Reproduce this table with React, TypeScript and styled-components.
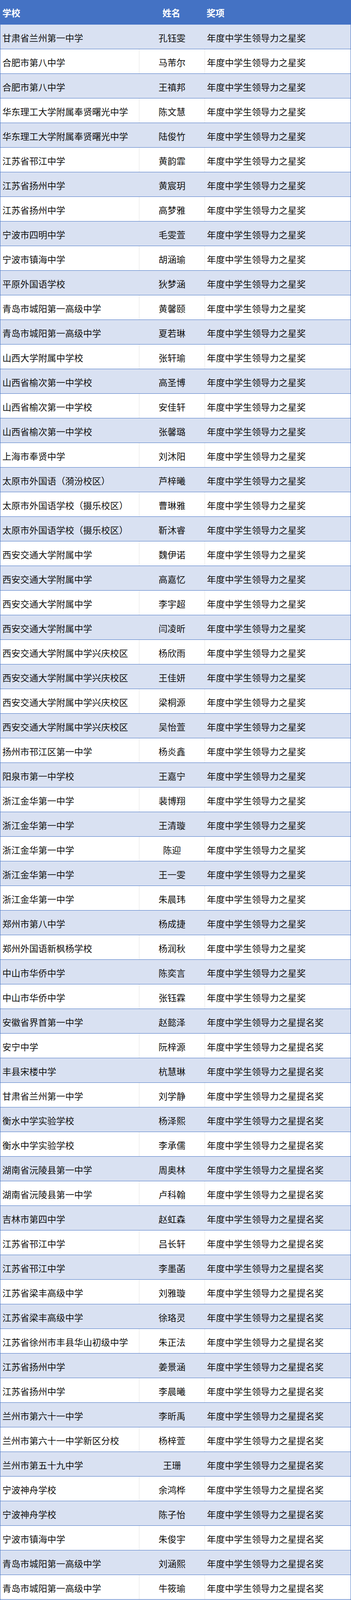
import React from "react";
import styled, { createGlobalStyle } from "styled-components";

const GlobalStyle = createGlobalStyle`
  html, body { margin: 0; padding: 0; background: #ffffff; }
  body { font-family: "Noto Sans CJK SC", "Noto Sans", sans-serif; }
`;

const A = "年度中学生领导力之星奖";
const B = "年度中学生领导力之星提名奖";

const data: [string, string, string][] = [
  ["甘肃省兰州第一中学", "孔钰雯", A],
  ["合肥市第八中学", "马芾尔", A],
  ["合肥市第八中学", "王禛邦", A],
  ["华东理工大学附属奉贤曙光中学", "陈文慧", A],
  ["华东理工大学附属奉贤曙光中学", "陆俊竹", A],
  ["江苏省邗江中学", "黄韵霏", A],
  ["江苏省扬州中学", "黄宸玥", A],
  ["江苏省扬州中学", "高梦雅", A],
  ["宁波市四明中学", "毛雯萱", A],
  ["宁波市镇海中学", "胡涵瑜", A],
  ["平原外国语学校", "狄梦涵", A],
  ["青岛市城阳第一高级中学", "黄馨颐", A],
  ["青岛市城阳第一高级中学", "夏若琳", A],
  ["山西大学附属中学校", "张轩瑜", A],
  ["山西省榆次第一中学校", "高圣博", A],
  ["山西省榆次第一中学校", "安佳轩", A],
  ["山西省榆次第一中学校", "张馨璐", A],
  ["上海市奉贤中学", "刘沐阳", A],
  ["太原市外国语（漪汾校区）", "芦梓曦", A],
  ["太原市外国语学校（摄乐校区）", "曹琳雅", A],
  ["太原市外国语学校（摄乐校区）", "靳沐睿", A],
  ["西安交通大学附属中学", "魏伊诺", A],
  ["西安交通大学附属中学", "高嘉忆", A],
  ["西安交通大学附属中学", "李宇超", A],
  ["西安交通大学附属中学", "闫凌昕", A],
  ["西安交通大学附属中学兴庆校区", "杨欣雨", A],
  ["西安交通大学附属中学兴庆校区", "王佳妍", A],
  ["西安交通大学附属中学兴庆校区", "梁桐源", A],
  ["西安交通大学附属中学兴庆校区", "吴怡萱", A],
  ["扬州市邗江区第一中学", "杨炎鑫", A],
  ["阳泉市第一中学校", "王嘉宁", A],
  ["浙江金华第一中学", "裴博翔", A],
  ["浙江金华第一中学", "王清璇", A],
  ["浙江金华第一中学", "陈迎", A],
  ["浙江金华第一中学", "王一雯", A],
  ["浙江金华第一中学", "朱晨玮", A],
  ["郑州市第八中学", "杨成捷", A],
  ["郑州外国语新枫杨学校", "杨润秋", A],
  ["中山市华侨中学", "陈奕言", A],
  ["中山市华侨中学", "张钰霖", A],
  ["安徽省界首第一中学", "赵懿泽", B],
  ["安宁中学", "阮梓源", B],
  ["丰县宋楼中学", "杭慧琳", B],
  ["甘肃省兰州第一中学", "刘学静", B],
  ["衡水中学实验学校", "杨泽熙", B],
  ["衡水中学实验学校", "李承儒", B],
  ["湖南省沅陵县第一中学", "周奥林", B],
  ["湖南省沅陵县第一中学", "卢科翰", B],
  ["吉林市第四中学", "赵虹森", B],
  ["江苏省邗江中学", "吕长轩", B],
  ["江苏省邗江中学", "李墨菡", B],
  ["江苏省梁丰高级中学", "刘雅璇", B],
  ["江苏省梁丰高级中学", "徐珞灵", B],
  ["江苏省徐州市丰县华山初级中学", "朱正法", B],
  ["江苏省扬州中学", "姜景涵", B],
  ["江苏省扬州中学", "李晨曦", B],
  ["兰州市第六十一中学", "李昕禹", B],
  ["兰州市第六十一中学新区分校", "杨梓萱", B],
  ["兰州市第五十九中学", "王珊", B],
  ["宁波神舟学校", "余鸿桦", B],
  ["宁波神舟学校", "陈子怡", B],
  ["宁波市镇海中学", "朱俊宇", B],
  ["青岛市城阳第一高级中学", "刘涵熙", B],
  ["青岛市城阳第一高级中学", "牛筱瑜", B],
  ["上海市奉贤中学", "张芯甜", B],
  ["上海市奉贤中学", "梅姗", B],
  ["太原市外国语学校（漪汾校区）", "何宜静", B],
  ["通辽实验中学", "李乐", B],
  ["通辽实验中学", "付斌", B],
  ["五家渠第五中学", "张茹涵", B],
  ["西安交通大学附属中学", "常逸乐", B],
  ["西安交通大学附属中学", "董儒汉", B],
  ["西安交通大学附属中学航天学校", "刘家亦", B],
  ["西安交通大学附属中学航天学校", "黄歆然", B],
  ["西安交通大学附属中学兴庆校区", "和郑阳", B],
  ["西安交通大学附属中学兴庆校区", "武子昂", B],
  ["扬州市邗江区第一中学", "闵宇辉", B],
  ["郑州外国语新枫杨学校", "李嘉昊", B],
  ["郑州外国语新枫杨学校", "胡煊萱", B],
  ["中山市华侨中学", "袁梓淇", B],
];

const Table = styled.div`
  width: 899px;
  display: flex;
  flex-direction: column;
`;

const HeaderRow = styled.div`
  display: grid;
  grid-template-columns: 355px 168px 1fr;
  height: 63px;
  flex: 0 0 63px;
  background: #4472c4;
  color: #ffffff;
  font-size: 23px;
  font-weight: 700;
  box-sizing: border-box;
`;

const Row = styled.div<{ $shaded: boolean }>`
  display: grid;
  grid-template-columns: 355px 168px 1fr;
  height: 63px;
  flex: 0 0 63px;
  box-sizing: border-box;
  background: ${(p) => (p.$shaded ? "#d9e1f2" : "#ffffff")};
  border-left: 1px solid #4472c4;
  border-right: 1px solid #4472c4;
  border-bottom: 1px solid #4472c4;
  color: #111111;
  font-size: 23px;
`;

const Cell = styled.div<{ $align?: "left" | "center"; $divider?: string }>`
  display: flex;
  align-items: center;
  justify-content: ${(p) => (p.$align === "center" ? "center" : "flex-start")};
  padding: 3px 0 0 ${(p) => (p.$align === "center" ? "0" : "5px")};
  box-sizing: border-box;
  white-space: nowrap;
  overflow: hidden;
  border-left: 1px solid ${(p) => p.$divider || "transparent"};
  &:first-child {
    border-left: none;
  }
`;

const HeadCell = styled.div<{ $align?: "left" | "center" }>`
  display: flex;
  align-items: center;
  justify-content: ${(p) => (p.$align === "center" ? "center" : "flex-start")};
  padding: 0 0 0 ${(p) => (p.$align === "center" ? "0" : "6px")};
  white-space: nowrap;
`;

export default function App() {
  return (
    <>
      <GlobalStyle />
      <Table>
        <HeaderRow>
          <HeadCell>学校</HeadCell>
          <HeadCell $align="center">姓名</HeadCell>
          <HeadCell>奖项</HeadCell>
        </HeaderRow>
        {data.map(([school, name, award], i) => {
          const shaded = i % 2 === 0;
          const divider = shaded ? "transparent" : "#e3e3e3";
          return (
            <Row key={i} $shaded={shaded}>
              <Cell>{school}</Cell>
              <Cell $align="center" $divider={divider}>
                {name}
              </Cell>
              <Cell $divider={divider}>{award}</Cell>
            </Row>
          );
        })}
      </Table>
    </>
  );
}
